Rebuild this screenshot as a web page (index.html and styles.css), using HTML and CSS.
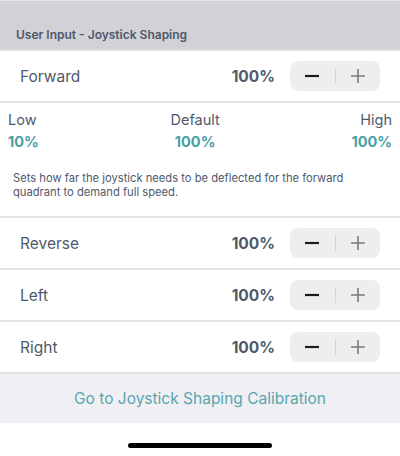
FILE: index.html
```html
<!DOCTYPE html>
<html lang="en">
<head>
<meta charset="UTF-8">
<title>User Input - Joystick Shaping</title>
<link rel="stylesheet" href="styles.css">
</head>
<body>
<div class="screen">
  <div class="section-header">User Input - Joystick Shaping</div>

  <div class="row">
    <span class="row-label">Forward</span>
    <span class="row-value">100%</span>
    <div class="stepper">
      <button class="step minus" aria-label="Decrease">
        <svg width="16" height="16" viewBox="0 0 16 16"><path d="M1 8h14" stroke="#1c1c1e" stroke-width="2.2"/></svg>
      </button>
      <span class="step-divider"></span>
      <button class="step plus" aria-label="Increase">
        <svg width="16" height="16" viewBox="0 0 16 16"><path d="M1 8h14M8 1v14" stroke="#7a7a7e" stroke-width="1.6"/></svg>
      </button>
    </div>
  </div>

  <div class="info">
    <div class="range">
      <div class="range-col left">
        <span class="range-name">Low</span>
        <span class="range-val">10%</span>
      </div>
      <div class="range-col mid">
        <span class="range-name">Default</span>
        <span class="range-val">100%</span>
      </div>
      <div class="range-col right">
        <span class="range-name">High</span>
        <span class="range-val">100%</span>
      </div>
    </div>
    <p class="desc">Sets how far the joystick needs to be deflected for the forward quadrant to demand full speed.</p>
  </div>

  <div class="row">
    <span class="row-label">Reverse</span>
    <span class="row-value">100%</span>
    <div class="stepper">
      <button class="step minus" aria-label="Decrease">
        <svg width="16" height="16" viewBox="0 0 16 16"><path d="M1 8h14" stroke="#1c1c1e" stroke-width="2.2"/></svg>
      </button>
      <span class="step-divider"></span>
      <button class="step plus" aria-label="Increase">
        <svg width="16" height="16" viewBox="0 0 16 16"><path d="M1 8h14M8 1v14" stroke="#7a7a7e" stroke-width="1.6"/></svg>
      </button>
    </div>
  </div>

  <div class="row">
    <span class="row-label">Left</span>
    <span class="row-value">100%</span>
    <div class="stepper">
      <button class="step minus" aria-label="Decrease">
        <svg width="16" height="16" viewBox="0 0 16 16"><path d="M1 8h14" stroke="#1c1c1e" stroke-width="2.2"/></svg>
      </button>
      <span class="step-divider"></span>
      <button class="step plus" aria-label="Increase">
        <svg width="16" height="16" viewBox="0 0 16 16"><path d="M1 8h14M8 1v14" stroke="#7a7a7e" stroke-width="1.6"/></svg>
      </button>
    </div>
  </div>

  <div class="row">
    <span class="row-label">Right</span>
    <span class="row-value">100%</span>
    <div class="stepper">
      <button class="step minus" aria-label="Decrease">
        <svg width="16" height="16" viewBox="0 0 16 16"><path d="M1 8h14" stroke="#1c1c1e" stroke-width="2.2"/></svg>
      </button>
      <span class="step-divider"></span>
      <button class="step plus" aria-label="Increase">
        <svg width="16" height="16" viewBox="0 0 16 16"><path d="M1 8h14M8 1v14" stroke="#7a7a7e" stroke-width="1.6"/></svg>
      </button>
    </div>
  </div>

  <div class="footer">
    <a class="footer-link" href="#">Go to Joystick Shaping Calibration</a>
  </div>

  <div class="home-area">
    <div class="home-indicator"></div>
  </div>
</div>
</body>
</html>
```

FILE: styles.css
```css
html, body {
    margin: 0;
    height: 100%;
    background: #fff;
}
body {
    font-family: "Inter", "Noto Sans", sans-serif;
    color: #4f596c;
}
.screen {
    width: 400px;
    height: 456px;
    display: flex;
    flex-direction: column;
}
.section-header {
    height: 51px;
    box-sizing: border-box;
    border-top: 1px solid #e4e4e8;
    border-bottom: 2px solid #e2e2e5;
    background: #d1d1d6;
    padding: 0 16px 7px;
    display: flex;
    align-items: flex-end;
    font-size: 12px;
    font-weight: 600;
    color: #4f596c;
}

/* setting rows */
.row {
    height: 52px;
    box-sizing: border-box;
    border-bottom: 2px solid #e2e2e5;
    display: flex;
    align-items: center;
    padding: 0 20px;
}
.row-label {
    flex: 1;
    font-size: 15.5px;
}
.row-value {
    font-size: 15.5px;
    font-weight: 700;
    margin-right: 15px;
}
.stepper {
    width: 90px;
    height: 30px;
    border-radius: 8px;
    background: #eeeeef;
    display: flex;
    align-items: center;
}
.step {
    flex: 1;
    height: 100%;
    border: none;
    background: none;
    padding: 0;
    display: flex;
    align-items: center;
    justify-content: center;
    cursor: pointer;
}
.step-divider {
    width: 1px;
    height: 16px;
    background: #d4d4d8;
}

/* low / default / high block */
.info {
    height: 115px;
    box-sizing: border-box;
    border-bottom: 2px solid #e2e2e5;
    padding: 8px 8px 0;
}
.range {
    display: flex;
    justify-content: space-between;
}
.range-col {
    display: flex;
    flex-direction: column;
    gap: 5px;
}
.range-col.mid { align-items: center; }
.range-col.right { align-items: flex-end; }
.range-name {
    font-size: 14.5px;
}
.range-val {
    font-size: 14.5px;
    font-weight: 700;
    color: #4a9ea6;
}
.desc {
    max-width: 348px;
    margin: 21px 0 0 5px;
    font-size: 11.2px;
    line-height: 14px;
    color: #4f596c;
}

.footer {
    height: 49px;
    background: #efeff4;
    display: flex;
    align-items: center;
    justify-content: center;
}
.footer-link {
    font-size: 15.5px;
    color: #5aa6af;
    text-decoration: none;
}
.home-area {
    flex: 1;
    display: flex;
    justify-content: center;
    padding-top: 20px;
}
.home-indicator {
    width: 144px;
    height: 5px;
    border-radius: 3px;
    background: #000;
}
```
